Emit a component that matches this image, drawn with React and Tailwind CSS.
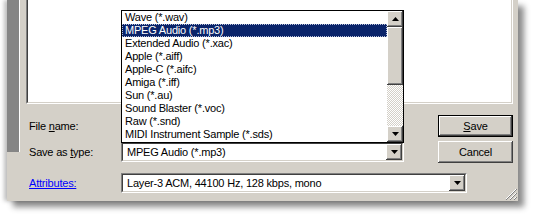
import React from "react";

const raised =
  "bg-[#d4d0c8] shadow-[inset_-1px_-1px_#404040,inset_1px_1px_#ffffff,inset_-2px_-2px_#808080,inset_2px_2px_#d4d0c8]";

function Arrow({ up }) {
  return (
    <svg width="7" height="4" viewBox="0 0 7 4" className="block">
      {up ? <polygon points="3.5,0 7,4 0,4" fill="#000" /> : <polygon points="0,0 7,0 3.5,4" fill="#000" />}
    </svg>
  );
}

function ArrowBtn({ up }) {
  return (
    <div className={`w-[16px] h-[16px] shrink-0 flex items-center justify-center ${raised}`}>
      <Arrow up={up} />
    </div>
  );
}

function Combo({ width, text }) {
  return (
    <div
      className={`${width} h-[20px] shrink-0 border-t border-l border-t-[#808080] border-l-[#808080] border-b border-r border-b-white border-r-white`}
    >
      <div className="h-full flex items-center bg-white border-t border-l border-t-[#404040] border-l-[#404040] border-b border-r border-b-[#d4d0c8] border-r-[#d4d0c8]">
        <div className="flex-1 pl-[4px] whitespace-nowrap overflow-hidden leading-[16px]">{text}</div>
        <ArrowBtn />
      </div>
    </div>
  );
}

const items = [
  "Wave (*.wav)",
  "MPEG Audio (*.mp3)",
  "Extended Audio (*.xac)",
  "Apple (*.aiff)",
  "Apple-C (*.aifc)",
  "Amiga (*.iff)",
  "Sun (*.au)",
  "Sound Blaster (*.voc)",
  "Raw (*.snd)",
  "MIDI Instrument Sample (*.sds)",
];

export default function App() {
  return (
    <div className="relative w-[538px] h-[215px] bg-white overflow-hidden font-['Liberation_Sans',Arial,sans-serif] text-[11px] tracking-[-0.2px] text-black">
      <div className="relative ml-[7px] w-[511px] h-[201px] bg-[#d4d0c8] flex shadow-[6px_6px_6px_rgba(0,0,0,0.45),-3px_0_4px_rgba(0,0,0,0.25)]">
        <div className="w-[13px] h-[152px] shrink-0 bg-[#858585] border-r border-white" />
        <div className="flex-1 ml-[6px] pr-[5px] flex flex-col">
          <div className="h-[104px] shrink-0 border-l border-l-[#808080] border-b border-b-white border-r border-r-white">
            <div className="h-full bg-white border-l border-l-[#404040] border-b border-b-[#d4d0c8] border-r border-r-[#d4d0c8]" />
          </div>

          <div className="mt-[11px] h-[22px] flex items-center">
            <div className="w-[95px] pl-[3px] shrink-0">
              File <span className="underline">n</span>ame:
            </div>
            <Combo width="w-[283px]" text="" />
            <div className={`ml-auto w-[75px] h-[22px] border border-black ${raised} flex items-center justify-center`}>
              <span>
                <span className="underline">S</span>ave
              </span>
            </div>
          </div>

          <div className="mt-[4px] h-[22px] flex items-center">
            <div className="w-[95px] pl-[3px] shrink-0">
              Save as <span className="underline">t</span>ype:
            </div>
            <Combo width="w-[283px]" text="MPEG Audio (*.mp3)" />
            <div className={`ml-auto w-[75px] h-[22px] ${raised} flex items-center justify-center`}>Cancel</div>
          </div>

          <div className="mt-[10px] h-[20px] flex items-center">
            <div className="w-[95px] pl-[3px] shrink-0">
              <span className="text-[#0000ff] underline">Attributes:</span>
            </div>
            <Combo width="w-[346px]" text="Layer-3 ACM, 44100 Hz, 128 kbps, mono" />
          </div>
        </div>

        <svg width="12" height="12" viewBox="0 0 12 12" className="absolute right-[1px] bottom-[1px]">
          <line x1="11" y1="1" x2="1" y2="11" stroke="#ffffff" />
          <line x1="12" y1="1" x2="1" y2="12" stroke="#808080" />
          <line x1="11" y1="5" x2="5" y2="11" stroke="#ffffff" />
          <line x1="12" y1="5" x2="5" y2="12" stroke="#808080" />
          <line x1="11" y1="9" x2="9" y2="11" stroke="#ffffff" />
          <line x1="12" y1="9" x2="9" y2="12" stroke="#808080" />
        </svg>
      </div>

      <div className="absolute left-[121px] top-[10px] w-[283px] h-[133px] border border-black bg-white flex">
        <div className="flex-1 flex flex-col">
          {items.map((t, i) => (
            <div
              key={t}
              className={
                i === 1
                  ? "h-[13px] leading-[13px] pl-[3px] whitespace-nowrap bg-[#0a246a] text-white outline outline-1 outline-dotted outline-offset-[-1px] outline-[#b8c0d8]"
                  : "h-[13px] leading-[13px] pl-[3px] whitespace-nowrap"
              }
            >
              {t}
            </div>
          ))}
        </div>
        <div className="w-[16px] flex flex-col">
          <ArrowBtn up />
          <div className={`h-[58px] ${raised}`} />
          <div className="flex-1 bg-[repeating-conic-gradient(#d4d0c8_0%_25%,#ffffff_0%_50%)] bg-[length:2px_2px]" />
          <ArrowBtn />
        </div>
      </div>
    </div>
  );
}
